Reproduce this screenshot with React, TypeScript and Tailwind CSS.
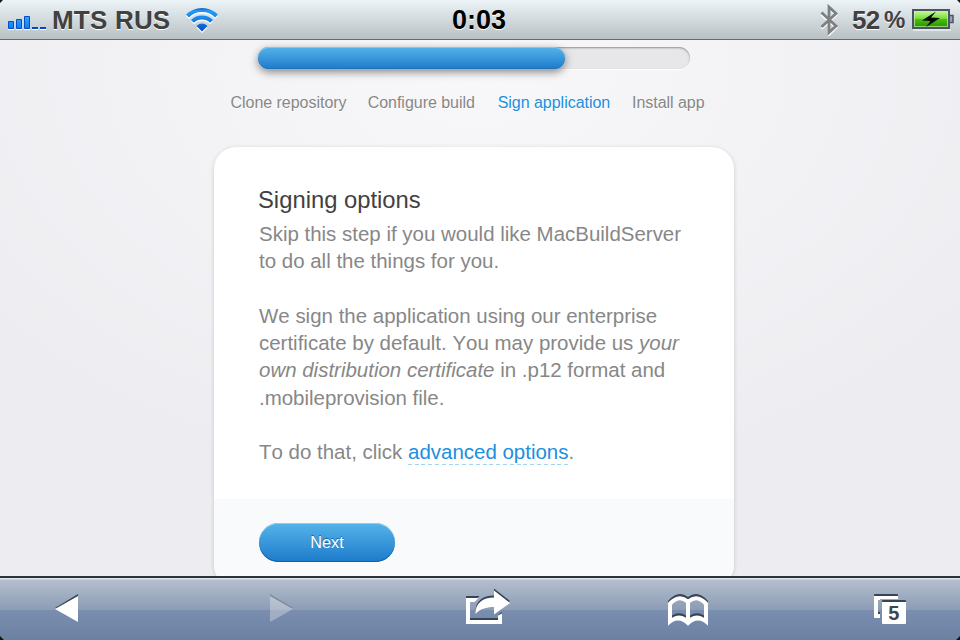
import React from 'react';

const steps = [
  { label: 'Clone repository', width: 'w-[137.2px]', active: false },
  { label: 'Configure build', width: 'w-[130px]', active: false },
  { label: 'Sign application', width: 'w-[134.3px]', active: true },
  { label: 'Install app', width: 'w-[80px]', active: false },
];

function Signal() {
  return (
    <svg className="mt-[15px] h-4 w-[40px]" viewBox="0 0 40 16">
      <defs>
        <linearGradient id="bar" x1="0" y1="0" x2="0" y2="1">
          <stop offset="0" stopColor="#35a8fb" />
          <stop offset="1" stopColor="#0a7df5" />
        </linearGradient>
      </defs>
      <path d="M0 14.5h6M8 14.5h6M16 14.5h6M24 14.5h6M32 14.5h6" stroke="#fff" />
      <g fill="url(#bar)" stroke="#064bc8" strokeWidth="1">
        <path d="M.5 6.5h5v7h-5zM8.5 4.5h5v9h-5zM16.5 1.5h5v12h-5z" />
      </g>
      <path d="M24 13h6M32 13h6" stroke="#0647c8" strokeWidth="2" />
    </svg>
  );
}

function Wifi() {
  return (
    <svg className="mt-[7px] h-[26px] w-[34px]" viewBox="0 0 34 26">
      <defs>
        <linearGradient id="wave" x1="0" y1="0" x2="0" y2="25" gradientUnits="userSpaceOnUse">
          <stop offset="0" stopColor="#064dbd" />
          <stop offset=".16" stopColor="#259af3" />
          <stop offset=".45" stopColor="#1687ed" />
          <stop offset="1" stopColor="#0648ca" />
        </linearGradient>
      </defs>
      <g fill="none" stroke="#fff" strokeWidth="4" transform="translate(0 1.5)">
        <path d="M2.5 9a20.5 20.5 0 0 1 29 0M7.5 14.3a13.5 13.5 0 0 1 19 0" />
        <path d="M11.5 19q5.5-4.8 11 0L17 24.5z" fill="#fff" stroke="none" />
      </g>
      <g fill="none" stroke="url(#wave)" strokeWidth="4">
        <path d="M2.5 9a20.5 20.5 0 0 1 29 0M7.5 14.3a13.5 13.5 0 0 1 19 0" />
        <path d="M11.5 19q5.5-4.8 11 0L17 24.5z" fill="url(#wave)" stroke="none" />
      </g>
    </svg>
  );
}

function Bluetooth() {
  return (
    <svg className="mt-1 h-8 w-5" viewBox="0 0 20 32" fill="none">
      <path d="M1.5 9.500 16 22.500 9 29.500V3l7 7L1.500 23.500" stroke="#fff" strokeWidth="2.600" transform="translate(0 1)" />
      <path d="M1.500 8.500 16 22 9 28.500V3l7 6.500L1.500 23" stroke="#7e8182" strokeWidth="2.800" />
    </svg>
  );
}

function Battery() {
  return (
    <svg className="mt-[8px] h-[24px] w-[43px]" viewBox="0 0 43 24">
      <defs>
        <linearGradient id="cell" x1="0" y1="0" x2="0" y2="1">
          <stop offset="0" stopColor="#93e45c" />
          <stop offset=".12" stopColor="#b9f48c" />
          <stop offset=".48" stopColor="#77dc36" />
          <stop offset=".52" stopColor="#48bf12" />
          <stop offset="1" stopColor="#288d05" />
        </linearGradient>
      </defs>
      <path d="M1 22h38" stroke="#fff" />
      <rect x="1" y="2" width="36" height="18" fill="url(#cell)" stroke="#4b5365" strokeWidth="2" />
      <rect x="2.500" y="3.500" width="33" height="15" fill="none" stroke="#c7f6a6" strokeOpacity=".65" />
      <path d="M38 7.500h3v7h-3" fill="#98a3b5" stroke="#4b5365" strokeWidth="1.500" />
      <path d="M24 3.500 10 12.500l8.500.5L14 19l14-9-9-.5z" fill="#050905" />
    </svg>
  );
}

function StatusBar() {
  return (
    <header className="relative z-10 flex h-10 shrink-0 items-start border-b border-[#626c75] bg-linear-to-b from-[#edf4f7] to-[#b9c1c5] font-bold text-[#414141]">
      <div className="flex w-[452px] pl-2">
        <Signal />
        <span className="ml-[4px] mt-[5px] w-[133px] whitespace-nowrap text-[26px] leading-[30px] tracking-[0.2px] [text-shadow:0_1px_0_#fff]">MTS RUS</span>
        <Wifi />
      </div>
      <span className="mt-[5px] w-[368px] whitespace-nowrap text-[27px] leading-[30px] text-black [text-shadow:0_1px_0_#fff]">0:03</span>
      <Bluetooth />
      <span className="ml-[12px] mt-[5px] w-[32px] whitespace-nowrap text-[26px] leading-[30px] tracking-[-0.7px] [text-shadow:0_1px_0_#fff]">52</span>
      <span className="mt-[5px] w-[28px] text-[24px] leading-[30px] [text-shadow:0_1px_0_#fff]">%</span>
      <Battery />
    </header>
  );
}

function Progress() {
  return (
    <div className="ml-[258px] mt-[7px] h-[22px] w-[432px] rounded-full bg-[#e7e7e9] shadow-[inset_0_1px_2px_#929292,0_1px_0_#fff]">
      <div className="h-[22px] w-[307px] rounded-full bg-linear-to-b from-[#55b3e9] to-[#1b7bcb] shadow-[inset_0_1px_0_#82c7ec,inset_0_-1px_0_#2474b5,0_3px_8px_#0007]" />
    </div>
  );
}

const arrowShape = 'M10.5 28C10 17 18 11.5 29 11.5V4.5L45 17 29 28.5V21c-8 0-14 2-18.5 7z';

function ShareIcon() {
  return (
    <svg className="h-10 w-12" viewBox="0 0 48 40">
      <path d="M1 10h13.5l-4 4H1zM37 26v4h-4v-1z" fill="#364454" />
      <path d="M5 33h28" stroke="#364454" strokeWidth="2" />
      <path d="M1 12h12.5L9.500 16H5v18h28v-4.500l4-2V38H1z" fill="#fff" />
      <path d={arrowShape} fill="#364454" transform="translate(0 -2)" />
      <path d={arrowShape} fill="#fff" />
    </svg>
  );
}

const bookShape =
  'M1 9Q11-2 21 5.500Q31-2 41 9V32Q31 21.500 21 32Q11 21.500 1 32ZM5 11Q12 3 19 9V24Q12 19.500 5 24ZM37 11Q30 3 23 9V24Q30 19.500 37 24Z';

function BookIcon() {
  return (
    <svg className="h-[34px] w-[42px]" viewBox="0 0 42 34" fillRule="evenodd">
      <path d="M1 8Q11-3.500 21 4Q31-3.500 41 8V12H1z M5 11Q12 3 19 9V12H5z M37 11Q30 3 23 9V12H37z" fill="#364454" />
      <path d="M5 22.500Q12 18 19 22.500V25H5zM23 22.500Q30 18 37 22.500V25H23z" fill="#364454" />
      <path d={bookShape} fill="#fff" transform="translate(0 .8)" />
    </svg>
  );
}

function PagesIcon() {
  return (
    <svg className="h-[32px] w-[34px]" viewBox="0 0 34 32">
      <path d="M1 5V2q0-1 1-1h22q1 0 1 1v3z" fill="#364454" />
      <path d="M1 3h24v3H7v1H5v14h2v4H2q-1 0-1-1z" fill="#fff" />
      <path d="M9 12V8q0-1 1-1h22q1 0 1 1v4z" fill="#364454" />
      <path d="M9 9h24v21q0 1-1 1H10q-1 0-1-1z" fill="#fff" />
      <path d="M5 19h2v2H5z" fill="#364454" />
      <text x="20.700" y="27" textAnchor="middle" fontSize="20" fontWeight="700" fill="#3b4654">5</text>
    </svg>
  );
}

function Toolbar() {
  return (
    <footer className="relative z-10 flex h-16 shrink-0 border-t-2 border-[#2d333a] bg-[linear-gradient(to_bottom,#dfe2e6_0,#dfe2e6_1px,#b4bfcd_2px,#8b9cb5_32px,#7a8fb0_32px,#6c80a0_62px)]">
      <svg className="ml-[54px] mt-4 h-[30px] w-[25px]" viewBox="0 0 25 30">
        <path d="M24 0v26L1 14z" fill="#364454" />
        <path d="M24 2v26L1 15z" fill="#fff" />
      </svg>
      <svg className="ml-[190px] mt-4 h-[30px] w-[25px] opacity-30" viewBox="0 0 25 30">
        <path d="M1 0v26l23-12z" fill="#364454" />
        <path d="M1 2v26l23-13z" fill="#fff" />
      </svg>
      <div className="ml-[171px] mt-[8px]"><ShareIcon /></div>
      <div className="ml-[154px] mt-[15px]"><BookIcon /></div>
      <div className="ml-[164px] mt-[15px]"><PagesIcon /></div>
    </footer>
  );
}

export default function App() {
  return (
    <div className="relative flex h-[640px] w-[960px] flex-col overflow-hidden bg-[#ededf0] font-['Liberation_Sans',Arial,sans-serif] [font-kerning:none]">
      <StatusBar />
      <main className="min-h-0 flex-1 overflow-hidden bg-[radial-gradient(ellipse_620px_420px_at_474px_30px,#f8f8fa,#ededf1)]">
        <Progress />
        <nav className="ml-[230.5px] mt-[24px] flex whitespace-nowrap text-[16px] leading-[20px] tracking-[-0.03px]">
          {steps.map((s) => (
            <span key={s.label} className={`${s.width} ${s.active ? 'text-[#208fdf]' : 'text-[#878787]'} [text-shadow:0_1px_0_#fff]`}>{s.label}</span>
          ))}
        </nav>
        <section className="ml-[214px] mt-[34px] h-[440px] w-[520px] overflow-hidden rounded-[22px] bg-white shadow-[0_1px_4px_#0000002b]">
          <div className="h-[352px] pl-[45px] pt-[39px]">
            <h1 className="-ml-px text-[23.8px] leading-[28px] text-[#414141]">Signing options</h1>
            <div className="mt-[6px] whitespace-nowrap text-[20.48px] leading-[27.25px] text-[#878787]">
              <p>Skip this step if you would like MacBuildServer<br />to do all the things for you.</p>
              <p className="mt-[27.25px]">We sign the application using our enterprise<br />certificate by default. You may provide us <em>your<br />own distribution certificate</em> in .p12 format and<br />.mobileprovision file.</p>
              <p className="mt-[27.25px]">To do that, click <a className="bg-[repeating-linear-gradient(to_right,#9fd4f4_0_4px,transparent_4px_6.8px)] bg-[length:100%_1.5px] bg-bottom bg-no-repeat pb-[2px] text-[#208fdf]">advanced options</a>.</p>
            </div>
          </div>
          <div className="h-[88px] bg-[#f8fafc] pl-[45px] pt-[24px]">
            <button className="block h-[39px] w-[136px] rounded-full bg-linear-to-b from-[#55b3e9] to-[#1b7bcb] text-[16.3px] text-white shadow-[inset_0_1px_0_#91cdec,inset_0_-1px_0_#1760a0] [text-shadow:0_-1px_0_#1764a2]">Next</button>
          </div>
        </section>
      </main>
      <Toolbar />
      <svg className="pointer-events-none absolute inset-0 z-20 h-full w-full" viewBox="0 0 960 640">
        <path d="M0 0h3L0 3zM960 0h-3l3 3zM0 640v-4l4 4zM960 640v-4l-4 4z" fill="#151719" />
      </svg>
    </div>
  );
}
